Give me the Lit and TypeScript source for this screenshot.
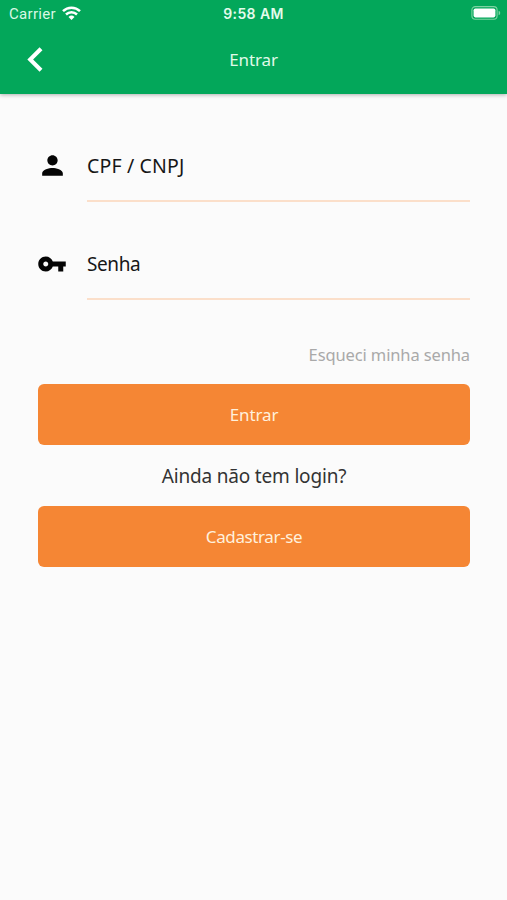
import { LitElement, html, css, svg } from "lit";
import { customElement, property } from "lit/decorators.js";

const personIcon = svg`<path d="M12 12c2.21 0 4-1.79 4-4s-1.79-4-4-4-4 1.79-4 4 1.79 4 4 4zm0 2c-2.67 0-8 1.34-8 4v2h16v-2c0-2.66-5.33-4-8-4z"/>`;
const keyIcon = svg`<path d="M12.65 10C11.83 7.67 9.61 6 7 6c-3.31 0-6 2.69-6 6s2.69 6 6 6c2.61 0 4.83-1.67 5.65-4H17v4h4v-4h2v-4H12.65zM7 14c-1.1 0-2-.9-2-2s.9-2 2-2 2 .9 2 2-.9 2-2 2z"/>`;

@customElement("status-bar")
class StatusBar extends LitElement {
  static styles = css`
    :host {
      display: grid;
      grid-template-columns: 1fr auto 1fr;
      align-items: center;
      height: 26px;
      padding: 0 6px 0 9px;
      font: 14.6px Inter, Roboto, sans-serif;
      color: #d9f8e4;
    }
    .carrier { display: flex; align-items: center; gap: 6px; padding-top: 2px; font-family: Roboto, sans-serif; font-size: 15px; letter-spacing: 0.3px; }
    .wifi { width: 19px; height: 14px; display: block; margin-top: -2px; }
    .time { font-weight: 600; font-size: 14px; letter-spacing: 0.4px; margin-left: -3px; color: #e3fbec; }
    .battery { justify-self: end; width: 30px; height: 14px; display: block; }
  `;
  render() {
    return html`
      <div class="carrier">
        <span>Carrier</span>
        <svg class="wifi" viewBox="0 0 19 14" fill="none" stroke="#fff" stroke-width="2.5">
          <path d="M1 5.2a12.2 12.2 0 0 1 17 0" />
          <path d="M4 8.5a7.9 7.9 0 0 1 11 0" />
          <path d="M9.5 13.9 6.5 10.9a4.3 4.3 0 0 1 6 0z" fill="#fff" stroke="none" />
        </svg>
      </div>
      <div class="time">9:58 AM</div>
      <svg class="battery" viewBox="0 0 30 14">
        <rect x="0.9" y="0.6" width="25.2" height="12.6" rx="3.4" fill="none" stroke="#7ed3a3" stroke-width="1.1" />
        <rect x="2.6" y="2.4" width="21.8" height="9" rx="1.8" fill="#fff" />
        <path d="M27.6 4.8a2.3 2.3 0 0 1 0 4.4z" fill="#7ed3a3" />
      </svg>
    `;
  }
}

@customElement("login-field")
class LoginField extends LitElement {
  @property() label = "";
  @property() kind = "person";
  static styles = css`
    :host { display: flex; height: 97.5px; }
    .icon { width: 49px; flex: none; padding-top: 12px; }
    .glyph { display: block; width: 30px; height: 30px; margin-left: -1px; fill: #050505; }
    .glyph.person { width: 31px; height: 31px; margin: -1px 0 0 -1.5px; }
    .box { flex: 1; height: 63px; box-sizing: border-box; border-bottom: 2px solid #fbdfca; }
    .text { line-height: 54px; font-size: 19px; color: #161616; white-space: nowrap; }
    .person-text { font-size: 19.5px; letter-spacing: 0.15px; }
    .key-text { letter-spacing: -0.4px; }
  `;
  render() {
    return html`
      <div class="icon"><svg class="glyph ${this.kind}" viewBox="0 0 24 24">${this.kind === "person" ? personIcon : keyIcon}</svg></div>
      <div class="box"><div class="text ${this.kind}-text">${this.label}</div></div>
    `;
  }
}

@customElement("app-root")
class AppRoot extends LitElement {
  static styles = css`
    :host {
      display: block;
      height: 900px;
      background: #fbfbfb;
      font-family: "Noto Sans", "Open Sans", sans-serif;
    }
    .header { height: 94px; background: #03a75a; box-shadow: 0 1px 4px rgba(0, 0, 0, 0.3); }
    .bar { display: grid; grid-template-columns: 60px 1fr 60px; align-items: center; height: 67px; }
    .back { display: block; width: 49px; height: 49px; margin-left: 11px; fill: #fff; }
    .title { text-align: center; font-size: 17px; letter-spacing: -0.1px; color: #e0fae9; }
    .form { display: flex; flex-direction: column; padding: 45px 37px 0 38px; }
    .forgot { align-self: flex-end; line-height: 24px; margin-top: 9px; font-size: 16.5px; letter-spacing: -0.12px; color: #a9a9a9; white-space: nowrap; }
    .button { height: 61px; border: 0; border-radius: 6px; background: #f58634; color: #fff0dc; font: 17px "Noto Sans", sans-serif; letter-spacing: -0.1px; padding: 0; }
    .register { letter-spacing: -0.38px; }
    .login { margin-top: 17px; }
    .question { height: 61px; line-height: 62px; text-align: center; font-size: 19px; letter-spacing: -0.18px; color: #333; }
  `;
  render() {
    return html`
      <header class="header">
        <status-bar></status-bar>
        <div class="bar">
          <svg class="back" viewBox="0 0 24 24"><path d="M15.41 7.41 14 6l-6 6 6 6 1.41-1.41L10.83 12z" /></svg>
          <div class="title">Entrar</div>
        </div>
      </header>
      <main class="form">
        <login-field label="CPF / CNPJ" kind="person"></login-field>
        <login-field label="Senha" kind="key"></login-field>
        <div class="forgot">Esqueci minha senha</div>
        <button class="button login">Entrar</button>
        <div class="question">Ainda não tem login?</div>
        <button class="button register">Cadastrar-se</button>
      </main>
    `;
  }
}
